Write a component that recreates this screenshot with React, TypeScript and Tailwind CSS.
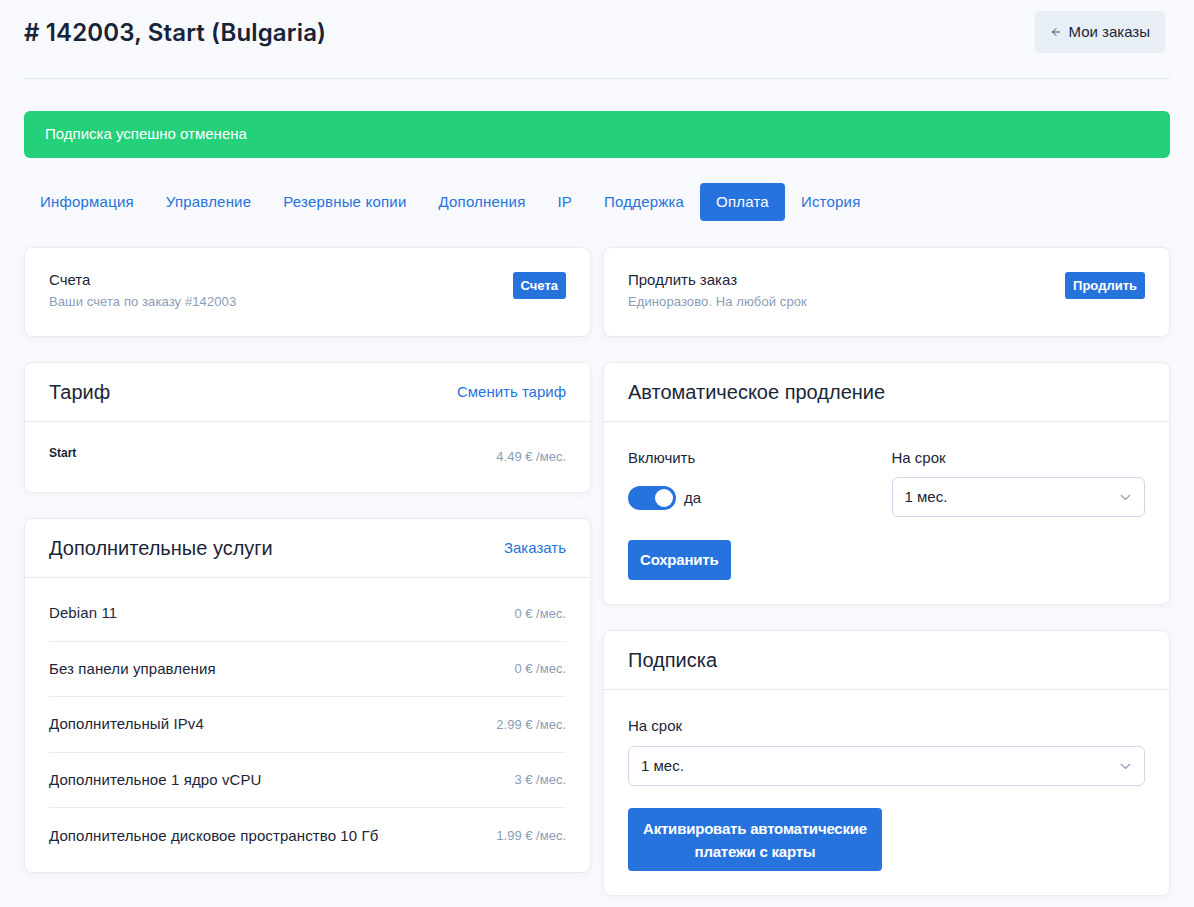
import { ArrowLeft } from "lucide-react";

const tabs = [
  "Информация",
  "Управление",
  "Резервные копии",
  "Дополнения",
  "IP",
  "Поддержка",
  "Оплата",
  "История",
];

const services = [
  { name: "Debian 11", price: "0 € /мес." },
  { name: "Без панели управления", price: "0 € /мес." },
  { name: "Дополнительный IPv4", price: "2.99 € /мес." },
  { name: "Дополнительное 1 ядро vCPU", price: "3 € /мес." },
  { name: "Дополнительное дисковое пространство 10 Гб", price: "1.99 € /мес." },
];

function Card({ children }: { children: React.ReactNode }) {
  return (
    <div className="bg-white rounded-lg border border-[#e8edf3] shadow-[0_2px_6px_rgba(30,50,90,0.04)]">
      {children}
    </div>
  );
}

function CardHeader({ title, action }: { title: string; action?: string }) {
  return (
    <div className="h-[59px] px-6 flex items-center justify-between border-b border-[#e6ebf2]">
      <h3 className="text-[20px] text-[#1b2538]">{title}</h3>
      {action && <a className="text-[15px] text-[#2673de]">{action}</a>}
    </div>
  );
}

function Chevron() {
  return (
    <svg width="11" height="7" viewBox="0 0 11 7" fill="none">
      <path d="M1 1l4.5 4.5L10 1" stroke="#8d9bb3" strokeWidth="1.2" />
    </svg>
  );
}

function Select() {
  return (
    <div className="h-10 w-full rounded-md border border-[#cfd8e6] bg-white flex items-center justify-between pl-[12px] pr-[13px] text-[15px] text-[#1b2538]">
      <span>1 мес.</span>
      <Chevron />
    </div>
  );
}

function ActionCard({ title, sub, button }: { title: string; sub: string; button: string }) {
  return (
    <Card>
      <div className="px-6 pt-6 pb-[26px] flex justify-between items-start">
        <div>
          <div className="text-[15px] leading-4 text-[#1b2538]">{title}</div>
          <div className="mt-[6px] text-[13px] leading-4 text-[#8c9cb8] tracking-[0.1px]">{sub}</div>
        </div>
        <button className="h-[27px] px-[8px] rounded-[3px] bg-[#2673de] text-white text-[13px] font-semibold">
          {button}
        </button>
      </div>
    </Card>
  );
}

export default function App() {
  return (
    <div className="min-h-screen bg-[#f8f9fc] px-6 pb-4 font-['Liberation_Sans',Arial,sans-serif] text-[#1b2538]">
      {/* page header */}
      <div className="flex items-start justify-between pt-[11px] h-[79px] border-b border-[#e1e8f0]">
        <h1 className="mt-[9px] text-[24px] leading-[26px] font-semibold font-['Inter',sans-serif] text-[#172338] tracking-[0.15px]">
          # 142003, Start (Bulgaria)
        </h1>
        <button className="mr-[5px] h-[42px] px-[15px] rounded-md bg-[#e8eef6] flex items-center gap-[7px] text-[15px] text-[#1b2538]">
          <ArrowLeft size={12} strokeWidth={1.6} />
          Мои заказы
        </button>
      </div>

      <div className="mt-8 h-[47px] rounded-md bg-[#25d07a] px-[21px] flex items-center text-[15px] text-white">
        Подписка успешно отменена
      </div>

      {/* tabs */}
      <div className="mt-[25px] flex">
        {tabs.map((t) => (
          <div
            key={t}
            className={
              t === "Оплата"
                ? "h-[38px] px-4 flex items-center rounded bg-[#2673de] text-white text-[15px] tracking-[0.2px]"
                : "h-[38px] px-4 flex items-center text-[#2673de] text-[15px] tracking-[0.2px]"
            }
          >
            {t}
          </div>
        ))}
      </div>

      <div className="mt-[26px] grid grid-cols-2 gap-x-3 items-start">
        {/* left column */}
        <div className="flex flex-col gap-[25px]">
          <ActionCard title="Счета" sub="Ваши счета по заказу #142003" button="Счета" />

          <Card>
            <CardHeader title="Тариф" action="Сменить тариф" />
            <div className="h-[70px] px-6 pt-6 flex justify-between items-start">
              <span className="text-[12px] leading-[14px] font-bold">Start</span>
              <span className="text-[13px] leading-[22px] text-[#8c9cb8]">4.49 € /мес.</span>
            </div>
          </Card>

          <Card>
            <CardHeader title="Дополнительные услуги" action="Заказать" />
            <div className="px-6 py-2">
              {services.map((s, i) => (
                <div
                  key={s.name}
                  className={
                    i < services.length - 1
                      ? "h-[55.5px] flex items-center justify-between border-b border-[#e6ebf4]"
                      : "h-[55.5px] flex items-center justify-between"
                  }
                >
                  <span className="text-[15px] tracking-[0.1px]">{s.name}</span>
                  <span className="text-[13px] text-[#8c9cb8]">{s.price}</span>
                </div>
              ))}
            </div>
          </Card>
        </div>

        {/* right column */}
        <div className="flex flex-col gap-[25px]">
          <ActionCard title="Продлить заказ" sub="Единоразово. На любой срок" button="Продлить" />

          <Card>
            <CardHeader title="Автоматическое продление" />
            <div className="px-6 pt-6 pb-6">
              <div className="grid grid-cols-2 gap-x-[10px]">
                <div>
                  <div className="text-[15px] leading-6">Включить</div>
                  <div className="mt-[16px] flex items-center gap-2">
                    <div className="w-12 h-6 rounded-full bg-[#2673de] flex items-center justify-end pr-[3px]">
                      <div className="w-[18px] h-[18px] rounded-full bg-white" />
                    </div>
                    <span className="text-[15px]">да</span>
                  </div>
                </div>
                <div>
                  <div className="text-[15px] leading-6">На срок</div>
                  <div className="mt-[7px]">
                    <Select />
                  </div>
                </div>
              </div>
              <button className="mt-[23px] h-10 px-[12px] rounded bg-[#2673de] text-white text-[15px] font-semibold tracking-[-0.2px]">
                Сохранить
              </button>
            </div>
          </Card>

          <Card>
            <CardHeader title="Подписка" />
            <div className="px-6 pt-6 pb-6">
              <div className="text-[15px] leading-6">На срок</div>
              <div className="mt-2">
                <Select />
              </div>
              <button className="mt-[22px] w-[254px] h-[63px] rounded bg-[#2673de] text-white text-[15px] leading-[23px] font-semibold tracking-[-0.2px]">
                Активировать автоматические
                <br />
                платежи с карты
              </button>
            </div>
          </Card>
        </div>
      </div>
    </div>
  );
}
